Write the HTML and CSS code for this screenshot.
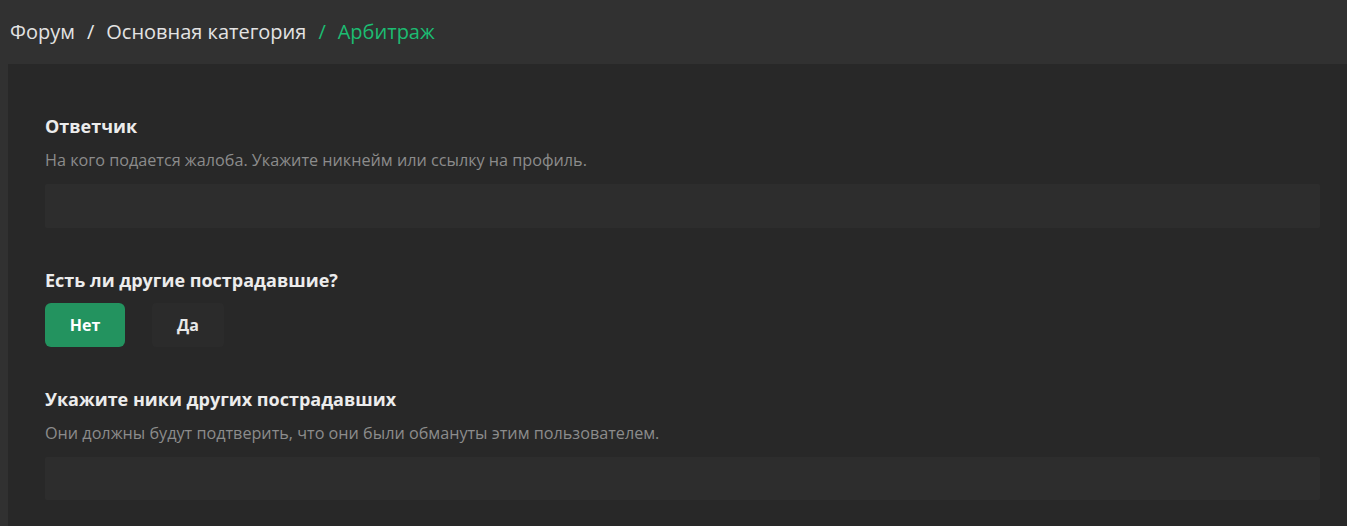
FILE: index.html
```html
<!DOCTYPE html>
<html lang="ru">
<head>
    <meta charset="UTF-8">
    <title>Арбитраж</title>
    <link rel="stylesheet" href="styles.css">
</head>
<body>
    <div class="breadcrumbs">
        <a href="#">Форум</a>
        <span class="sep">/</span>
        <a href="#">Основная категория</a>
        <span class="sep active">/</span>
        <span class="active">Арбитраж</span>
    </div>

    <div class="panel">
        <div class="field">
            <label class="field-title" for="defendant">Ответчик</label>
            <p class="field-hint">На кого подается жалоба. Укажите никнейм или ссылку на профиль.</p>
            <input type="text" id="defendant" class="field-input">
        </div>

        <div class="field">
            <div class="field-title">Есть ли другие пострадавшие?</div>
            <div class="choice">
                <button class="choice-btn selected">Нет</button>
                <button class="choice-btn">Да</button>
            </div>
        </div>

        <div class="field">
            <label class="field-title" for="victims">Укажите ники других пострадавших</label>
            <p class="field-hint">Они должны будут подтверить, что они были обмануты этим пользователем.</p>
            <input type="text" id="victims" class="field-input last">
        </div>
    </div>
</body>
</html>
```

FILE: styles.css
```css
/* General */
body {
    margin: 0;
    height: 526px;
    background: #313131;
    font-family: "Open Sans", "Noto Sans", sans-serif;
    color: #e6e6e6;
    overflow: hidden;
}

/* Breadcrumbs */
.breadcrumbs {
    height: 64px;
    display: flex;
    align-items: center;
    padding-left: 10px;
    padding-bottom: 2px;
    box-sizing: border-box;
    font-size: 20px;
}

.breadcrumbs a {
    color: #e3e3e3;
    text-decoration: none;
}

.breadcrumbs .sep {
    margin: 0 12px;
}

.breadcrumbs .active {
    color: #1cbc72;
}

/* Form panel */
.panel {
    margin-left: 8px;
    background: #282828;
    padding: 50px 27px 0 37px;
    height: 462px;
    box-sizing: border-box;
}

.field + .field {
    margin-top: 40px;
}

.field-title {
    display: block;
    font-size: 18px;
    font-weight: 700;
    line-height: 24px;
    color: #ececec;
}

.field-hint {
    margin: 11px 0 0;
    font-size: 16.2px;
    line-height: 22px;
    color: #8c8c8c;
}

.field-input {
    display: block;
    width: 100%;
    height: 44px;
    margin-top: 13px;
    box-sizing: border-box;
    border: none;
    border-radius: 2px;
    background: #2d2d2d;
    outline: none;
}

.field-input.last {
    height: 43px;
}

/* Yes / no switch */
.choice {
    display: flex;
    gap: 27px;
    margin-top: 11px;
}

.choice-btn {
    height: 44px;
    width: 72px;
    border: none;
    border-radius: 4px;
    background: #2b2b2b;
    color: #e8e8e8;
    font-family: inherit;
    font-size: 16px;
    font-weight: 700;
    cursor: pointer;
}

.choice-btn.selected {
    width: 80px;
    border-radius: 6px;
    background: #23935f;
    color: #ffffff;
}
```
